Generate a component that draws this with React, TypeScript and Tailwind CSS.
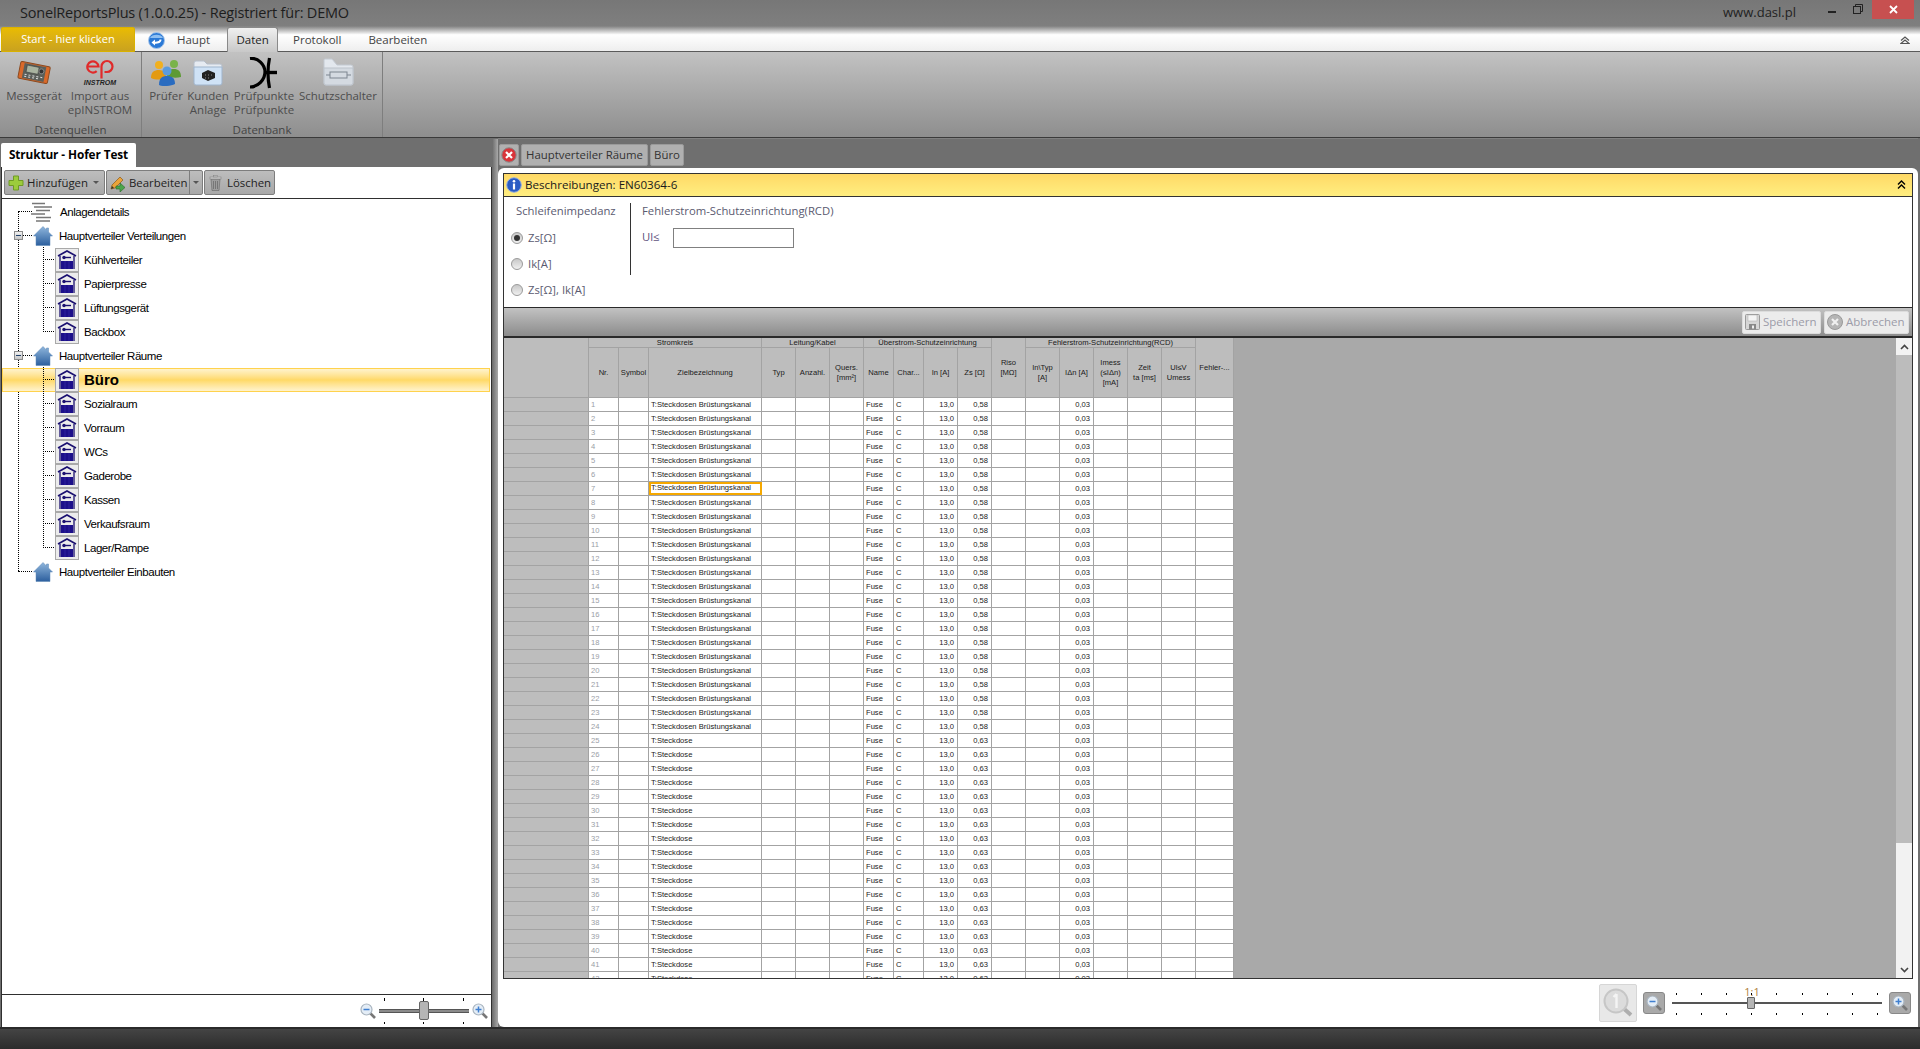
import React from "react";

function Meter() {
  return (
    <svg width="34" height="26" viewBox="0 0 34 26" className="block">
      <g transform="rotate(11 17 13)">
        <rect x="2" y="4" width="30" height="17" rx="1.5" fill="#d9692a" stroke="#8a4a20" />
        <rect x="6" y="5" width="22" height="15" fill="#5b5f5a" />
        <rect x="9" y="6.5" width="12" height="7" fill="#a9b3a0" stroke="#333" strokeWidth=".5" />
        <circle cx="24" cy="10" r="2.5" fill="#333" stroke="#aaa" strokeWidth=".6" />
        <path d="M8 16h2M12 16h2M16 16h2M20 16h2M24 16h2M8 18h2M12 18h2M16 18h2M20 18h2" stroke="#ddd" strokeWidth="1" />
      </g>
    </svg>
  );
}

function EpLogo() {
  return (
    <div className="flex flex-col items-center">
      <svg width="28" height="20" viewBox="0 0 28 20" className="block">
        <path d="M1.5 7.5h11a5.6 5.6 0 1 0-1.8 4.6" fill="none" stroke="#e02a2a" strokeWidth="2.2" />
        <path d="M15.5 19.5V7.5a5.5 5.5 0 1 1 5.5 5.5h-2.5" fill="none" stroke="#e02a2a" strokeWidth="2.2" />
      </svg>
      <span className="font-['Liberation_Sans',sans-serif] text-[7px] leading-[8px] font-bold italic text-[#222]">INSTROM</span>
    </div>
  );
}

function People() {
  return (
    <svg width="32" height="27" viewBox="0 0 32 27" className="block">
      <circle cx="9" cy="6" r="4" fill="#f2b01e" />
      <path d="M1 19c0-6 3-8 8-8s7 3 7 8c-4 2-11 2-15 0z" fill="#e39a12" />
      <circle cx="24" cy="5" r="4" fill="#79b34a" />
      <path d="M17 17c0-6 3-7 7-7s7 2 7 8c-4 1-10 1-14-1z" fill="#5e9a35" />
      <circle cx="17" cy="12" r="4.5" fill="#5a9bde" />
      <path d="M9 26c0-7 3-9 8-9s8 2 8 8c-4 2-12 3-16 1z" fill="#2a6cc0" />
    </svg>
  );
}

function FolderChip() {
  return (
    <svg width="30" height="26" viewBox="0 0 30 26" className="block">
      <path d="M1 3q0-2 2-2h8l3 3h13q2 0 2 2v4H1z" fill="#e6ebf2" stroke="#b6bfcb" />
      <path d="M1 7h28v16q0 2-2 2H3q-2 0-2-2z" fill="#cfe2f6" stroke="#9fb4cc" />
      <path d="M9 13l6-3 7 3v5l-7 3-6-3z" fill="#222" />
      <path d="M12 15h1M15 15h1M18 15h1M12 18h1M15 18h1" stroke="#888" />
    </svg>
  );
}

function FolderFuse() {
  return (
    <svg width="31" height="28" viewBox="0 0 31 28" className="block">
      <path d="M1 2q0-1 1-1h7l5 6h14q2 0 2 2v16q0 2-2 2H3q-2 0-2-2z" fill="#e3e8ee" stroke="#c4cad2" />
      <path d="M1 10h29v15q0 2-2 2H3q-2 0-2-2z" fill="#d4dae1" stroke="#bcc3cb" />
      <path d="M3 17h4M24 17h4" stroke="#7c8590" />
      <rect x="7" y="14" width="17" height="6" fill="none" stroke="#7c8590" />
    </svg>
  );
}

function BreakerSymbol() {
  return (
    <svg width="30" height="32" viewBox="0 0 30 32" className="block">
      <path d="M1 1.5c8-1 15 6 15 13.5S9 30 1 30" fill="none" stroke="#000" strokeWidth="3.2" />
      <path d="M20.5 1c-2 10-2 20 0 30" fill="none" stroke="#000" strokeWidth="3.2" />
      <path d="M15 15.5h13" fill="none" stroke="#000" strokeWidth="3.4" />
    </svg>
  );
}

function BackIcon() {
  return (
    <svg width="17" height="17" viewBox="0 0 17 17" className="block">
      <circle cx="8.5" cy="8.5" r="8" fill="#2a79d6" stroke="#a7c6ea" />
      <path d="M2 6a7 5 0 0 1 13 0z" fill="#8fc0f2" />
      <path d="M12.5 7.5c0 3-4 3.5-6.5 3" fill="none" stroke="#fff" strokeWidth="2" />
      <path d="M7 7.5l-3.5 3 3.5 3z" fill="#fff" />
    </svg>
  );
}

function ChevronsUp() {
  return (
    <svg width="9" height="10" viewBox="0 0 9 10" className="block">
      <path d="M1 4.5l3.5-3.5 3.5 3.5" fill="none" stroke="#000" strokeWidth="1.4" />
      <path d="M1 8.5l3.5-3.5 3.5 3.5" fill="none" stroke="#000" strokeWidth="1.4" />
    </svg>
  );
}

function PlusIcon() {
  return (
    <svg width="16" height="16" viewBox="0 0 16 16" className="block">
      <path d="M5.5 1h5v4.5H15v5h-4.5V15h-5v-4.5H1v-5h4.5z" fill="#9ccc3c" stroke="#6f9a25" />
    </svg>
  );
}

function EditIcon() {
  return (
    <svg width="17" height="18" viewBox="0 0 17 18" className="block">
      <path d="M2 15l1-4 8-8 3 3-8 8z" fill="#eaa33a" stroke="#8a5a1a" strokeWidth=".7" />
      <path d="M2 15l1-3 2 2z" fill="#333" />
      <path d="M7 12h4V9l5 4.5-5 4.5v-3H7z" fill="#4aa54a" stroke="#2a6a2a" strokeWidth=".6" />
    </svg>
  );
}

function TrashIcon() {
  return (
    <svg width="13" height="16" viewBox="0 0 13 16" className="block">
      <path d="M2 4h9l-1 11.5H3z" fill="#9d9d9d" stroke="#666" strokeWidth=".6" />
      <rect x="1" y="2" width="11" height="2" fill="#ccc" stroke="#777" strokeWidth=".5" />
      <rect x="4.5" y="0.5" width="4" height="1.5" fill="#bbb" stroke="#777" strokeWidth=".4" />
      <path d="M4.5 6v8M6.5 6v8M8.5 6v8" stroke="#666" strokeWidth=".7" />
    </svg>
  );
}

function LinesIcon() {
  return (
    <svg width="21" height="20" viewBox="0 0 21 20" className="block -ml-[2px] mr-[2px]">
      <path d="M1 1.5h13M3 5h18M5 8.5h14M0 12h14M5 15.5h15M5 19h14" stroke="#777" strokeWidth="1.7" />
    </svg>
  );
}

function HouseIcon() {
  return (
    <svg width="20" height="20" viewBox="0 0 20 20" className="block">
      <defs>
        <linearGradient id="hg" x1="0" y1="0" x2="0" y2="1">
          <stop offset="0" stopColor="#8fb6dc" />
          <stop offset="1" stopColor="#2c5f9e" />
        </linearGradient>
      </defs>
      <path d="M10 .5l3.5 3.5V2h2v4l4 4h-2.5v9.5h-14V10H.5z" fill="url(#hg)" stroke="#5a86b5" strokeWidth=".5" />
    </svg>
  );
}

function BoxIcon() {
  return (
    <div className="w-6 h-6 shrink-0 bg-[#ececec] border border-[#a9a9a9] flex items-center justify-center">
      <svg width="20" height="20" viewBox="0 0 20 20" className="block">
        <path d="M1 6L10 1l9 5" fill="none" stroke="#1a1070" strokeWidth="1.6" />
        <path d="M3 6v13M17 6v13" stroke="#1a1070" strokeWidth="1.3" />
        <circle cx="7" cy="7.5" r="1.7" fill="#1a1070" />
        <path d="M8 7.5h6" stroke="#1a1070" strokeWidth="1.4" />
        <rect x="4" y="11" width="12" height="8" fill="#1c0f8a" />
        <path d="M8 11v8M12 11v8" stroke="#3b30a8" strokeWidth=".6" />
      </svg>
    </div>
  );
}

function Expander() {
  return (
    <span className="absolute left-[13px] top-[7px] w-[9px] h-[9px] bg-gradient-to-b from-[#f2f2f2] to-[#c8c8c8] border border-[#8c8c8c] flex items-center justify-center">
      <span className="block w-[5px] h-px bg-[#20406a]" />
    </span>
  );
}

type TreeItem = { label: string; depth: 0 | 1; kind: "lines" | "house" | "box"; expand?: boolean; selected?: boolean };

const tree: TreeItem[] = [
  { label: "Anlagendetails", depth: 0, kind: "lines" },
  { label: "Hauptverteiler Verteilungen", depth: 0, kind: "house", expand: true },
  { label: "Kühlverteiler", depth: 1, kind: "box" },
  { label: "Papierpresse", depth: 1, kind: "box" },
  { label: "Lüftungsgerät", depth: 1, kind: "box" },
  { label: "Backbox", depth: 1, kind: "box" },
  { label: "Hauptverteiler Räume", depth: 0, kind: "house", expand: true },
  { label: "Büro", depth: 1, kind: "box", selected: true },
  { label: "Sozialraum", depth: 1, kind: "box" },
  { label: "Vorraum", depth: 1, kind: "box" },
  { label: "WCs", depth: 1, kind: "box" },
  { label: "Gaderobe", depth: 1, kind: "box" },
  { label: "Kassen", depth: 1, kind: "box" },
  { label: "Verkaufsraum", depth: 1, kind: "box" },
  { label: "Lager/Rampe", depth: 1, kind: "box" },
  { label: "Hauptverteiler Einbauten", depth: 0, kind: "house" },
];

function TreeRow({ item }: { item: TreeItem }) {
  return (
    <div className={"relative h-6 flex items-center " + (item.depth === 0 ? "pl-[32px]" : "pl-[54px]")}>
      {item.selected && (
        <span className="absolute inset-x-[1px] inset-y-0 bg-gradient-to-b from-[#fff3cc] via-[#ffd966] to-[#fff3cc] border border-[#ffd24d]" />
      )}
      {item.depth === 0 ? (
        <span className="absolute left-[17px] w-[14px] top-[11px] border-t border-dotted border-black" />
      ) : (
        <span className="absolute left-[42px] w-[13px] top-[11px] border-t border-dotted border-black" />
      )}
      {item.expand && <Expander />}
      <div className="relative flex items-center">
        {item.kind === "lines" && <LinesIcon />}
        {item.kind === "house" && <HouseIcon />}
        {item.kind === "box" && <BoxIcon />}
        <span
          className={
            "font-['Liberation_Sans',sans-serif] whitespace-nowrap text-black " +
            (item.selected
              ? "ml-[5px] text-[15px] font-bold"
              : item.depth === 0
                ? "ml-[6px] mt-px text-[11.5px] tracking-[-0.45px]"
                : "ml-[5px] mt-px text-[11.5px] tracking-[-0.45px]")
          }
        >
          {item.label}
        </span>
      </div>
    </div>
  );
}

function RibbonBtn({ w, icon, lines, h = "h-[33px]" }: { w: string; icon: React.ReactNode; lines: string[]; h?: string }) {
  return (
    <div className={"flex flex-col items-center shrink-0 " + w}>
      <div className={"flex items-end justify-center " + h}>{icon}</div>
      <div className="text-[11.5px] leading-[14px] text-[#4d4d4d] text-center whitespace-nowrap">
        {lines.map((l, i) => (
          <div key={i}>{l}</div>
        ))}
      </div>
    </div>
  );
}

function ToolBtn({ icon, label, w, caret }: { icon: React.ReactNode; label: string; w: string; caret?: "in" | "split" }) {
  return (
    <div className={"h-[25px] flex items-center rounded-[2px] border border-[#7d7d7d] bg-gradient-to-b from-[#bdbdbd] to-[#a8a8a8] text-[11.4px] text-[#222] " + w}>
      <span className="ml-[2px] w-[17px] flex justify-center shrink-0">{icon}</span>
      <span className="ml-[3px] whitespace-nowrap">{label}</span>
      {caret === "in" && <span className="ml-auto mr-[5px] w-0 h-0 border-x-[3px] border-x-transparent border-t-[3px] border-t-[#555]" />}
      {caret === "split" && (
        <span className="ml-auto h-full w-[13px] border-l border-[#7d7d7d] flex items-center justify-center">
          <span className="w-0 h-0 border-x-[3px] border-x-transparent border-t-[3px] border-t-[#555]" />
        </span>
      )}
    </div>
  );
}

function Radio({ on, label }: { on?: boolean; label: string }) {
  return (
    <div className="h-[26px] flex items-center">
      <span className="w-[12px] h-[12px] rounded-full border border-[#9a9a9a] bg-gradient-to-b from-[#c8c8c8] to-[#f0f0f0] flex items-center justify-center shrink-0">
        {on && <span className="w-[6px] h-[6px] rounded-full bg-[#333]" />}
      </span>
      <span className="ml-[5px] text-[11.3px] text-[#5a5a70] whitespace-nowrap">{label}</span>
    </div>
  );
}

type Col = { key: string; w: string; head: React.ReactNode };

const groups: { title?: string; w?: string; cols: Col[] }[] = [
  {
    title: "Stromkreis",
    w: "w-[173px]",
    cols: [
      { key: "nr", w: "w-[30px]", head: "Nr." },
      { key: "sym", w: "w-[30px]", head: "Symbol" },
      { key: "ziel", w: "w-[113px]", head: "Zielbezeichnung" },
    ],
  },
  {
    title: "Leitung/Kabel",
    w: "w-[102px]",
    cols: [
      { key: "typ", w: "w-[34px]", head: "Typ" },
      { key: "anz", w: "w-[34px]", head: "Anzahl." },
      { key: "qu", w: "w-[34px]", head: <>Quers.<br />[mm²]</> },
    ],
  },
  {
    title: "Überstrom-Schutzeinrichtung",
    w: "w-[128px]",
    cols: [
      { key: "name", w: "w-[30px]", head: "Name" },
      { key: "char", w: "w-[30px]", head: "Char..." },
      { key: "in", w: "w-[34px]", head: "In [A]" },
      { key: "zs", w: "w-[34px]", head: "Zs [Ω]" },
    ],
  },
  { cols: [{ key: "riso", w: "w-[34px]", head: <>Riso<br />[MΩ]</> }] },
  {
    title: "Fehlerstrom-Schutzeinrichtung(RCD)",
    w: "w-[170px]",
    cols: [
      { key: "intyp", w: "w-[34px]", head: <>In\Typ<br />[A]</> },
      { key: "idn", w: "w-[34px]", head: "IΔn [A]" },
      { key: "imess", w: "w-[34px]", head: <>Imess<br />(≤IΔn)<br />[mA]</> },
      { key: "zeit", w: "w-[34px]", head: <>Zeit<br />ta [ms]</> },
      { key: "ul", w: "w-[34px]", head: <>Ul≤V<br />Umess</> },
    ],
  },
  { cols: [{ key: "feh", w: "w-[38px]", head: "Fehler-..." }] },
];

const allCols = groups.flatMap((g) => g.cols);

const rows = Array.from({ length: 42 }, (_, i) => ({
  nr: String(i + 1),
  ziel: i < 24 ? "T:Steckdosen Brüstungskanal" : "T:Steckdose",
  name: "Fuse",
  char: "C",
  in: "13,0",
  zs: i < 24 ? "0,58" : "0,63",
  idn: "0,03",
})) as Record<string, string>[];

function HeadCell({ w, children }: { w: string; children: React.ReactNode }) {
  return (
    <div className={"shrink-0 h-full border-r border-[#a3a3a3] flex items-center justify-center text-center leading-[10px] " + w}>
      <span>{children}</span>
    </div>
  );
}

function Grid() {
  return (
    <div className="flex-1 min-w-0 overflow-hidden bg-[#a9a9a9] font-['Liberation_Sans',sans-serif] text-[7.6px] text-[#1a1a1a]">
      <div className="flex h-[60px] w-max bg-[#bdbdbd] border-b border-[#a3a3a3]">
        <div className="w-[85px] shrink-0 border-r border-[#a3a3a3]" />
        {groups.map((g, i) =>
          g.title ? (
            <div key={i} className={"shrink-0 flex flex-col " + g.w}>
              <div className="h-[10px] leading-[10px] border-b border-[#a3a3a3] border-r text-center">{g.title}</div>
              <div className="flex flex-1">
                {g.cols.map((c) => (
                  <HeadCell key={c.key} w={c.w}>{c.head}</HeadCell>
                ))}
              </div>
            </div>
          ) : (
            <HeadCell key={i} w={g.cols[0].w}>{g.cols[0].head}</HeadCell>
          )
        )}
      </div>
      {rows.map((r, ri) => (
        <div key={ri} className="flex h-[14px] w-max border-b border-[#a3a3a3]">
          <div className="w-[85px] shrink-0 bg-[#bdbdbd] border-r border-[#a3a3a3]" />
          {allCols.map((c) => {
            const val = r[c.key] ?? "";
            const selected = ri === 6 && c.key === "ziel";
            const right = c.key === "in" || c.key === "zs" || c.key === "idn";
            return (
              <div
                key={c.key}
                className={
                  "shrink-0 bg-white whitespace-nowrap overflow-hidden " +
                  c.w +
                  (right ? " text-right pr-[3px]" : selected ? "" : " pl-[2px]") +
                  (c.key === "nr" ? " text-[#9a9ea6]" : "") +
                  (selected ? " border-2 border-[#f5a800] leading-[8px]" : " leading-[13px] border-r border-[#a3a3a3]")
                }
              >
                {val}
              </div>
            );
          })}
        </div>
      ))}
    </div>
  );
}

function Magnifier({ sign }: { sign: "+" | "-" }) {
  return (
    <svg width="16" height="16" viewBox="0 0 16 16" className="block">
      <path d="M10 10l5 5" stroke="#777" strokeWidth="2.6" />
      <circle cx="6.5" cy="6.5" r="5.5" fill="#e4edf6" stroke="#a9b4bf" strokeWidth="1.2" />
      <path d={sign === "+" ? "M3.5 6.5h6M6.5 3.5v6" : "M3.5 6.5h6"} stroke="#3f7fd0" strokeWidth="1.5" />
    </svg>
  );
}

const leftTicks = [5, 44, 84];
const rightTicks = [0, 25, 50, 75, 100, 126, 151, 176, 201];

export default function App() {
  return (
    <div className="w-full h-[1049px] flex flex-col overflow-hidden bg-[#6f6f6f] font-['Open_Sans','Noto_Sans',sans-serif]">
      {/* title */}
      <div className="h-[26px] shrink-0 flex items-center bg-gradient-to-b from-[#777777] to-[#7f7f7f]">
        <span className="ml-[20px] text-[14.5px] tracking-[-0.2px] text-[#1d1d1d] whitespace-nowrap">SonelReportsPlus (1.0.0.25) - Registriert für: DEMO</span>
        <span className="ml-auto text-[13px] text-[#222] whitespace-nowrap">www.dasl.pl</span>
        <div className="ml-[32px] w-[8px] h-[2px] bg-[#222] mt-[-2px]" />
        <svg width="10" height="10" viewBox="0 0 10 10" className="block ml-[17px] mt-[-8px]">
          <path d="M2.5 2.5V.5h7v7h-2" fill="none" stroke="#222" />
          <rect x=".5" y="2.5" width="7" height="7" fill="none" stroke="#222" />
        </svg>
        <div className="ml-[9px] mr-[6px] w-[42px] h-[19px] self-start bg-[#c75050] flex items-center justify-center">
          <svg width="9" height="9" viewBox="0 0 9 9" className="block">
            <path d="M1 1l7 7M8 1l-7 7" stroke="#fff" strokeWidth="1.8" />
          </svg>
        </div>
      </div>
      {/* tabs */}
      <div className="h-[26px] shrink-0 flex items-end bg-gradient-to-b from-[#808080] via-[#ffffff] via-35% to-[#eeeeee] border-b border-[#5a5a5a] text-[11.5px] text-[#444] relative">
        <div className="ml-[1px] w-[134px] h-[25px] mb-[-1px] flex items-center justify-center rounded-t-[2px] border border-[#d9b100] bg-gradient-to-b from-[#e9bb00] to-[#c9a21e] text-white text-[11.2px]">
          Start - hier klicken
        </div>
        <div className="ml-[13px] self-center mt-[3px]"><BackIcon /></div>
        <span className="ml-[12px] mb-[2px] leading-[18px]">Haupt</span>
        <div className="ml-[17px] w-[51px] h-[25px] mb-[-1px] flex items-center justify-center rounded-t-[3px] border border-b-0 border-[#8a8a8a] bg-gradient-to-b from-[#f0f0f0] to-[#c8c8c8] text-[#222] z-10">Daten</div>
        <span className="ml-[15px] mb-[2px] leading-[18px]">Protokoll</span>
        <span className="ml-[27px] mb-[2px] leading-[18px]">Bearbeiten</span>
        <span className="ml-auto mr-[10px] mb-[7px]">
          <svg width="10" height="8" viewBox="0 0 10 8" className="block">
            <path d="M1 4.5L5 1l4 3.5M1 7.5h8L5 4z" fill="none" stroke="#555" strokeWidth="1.2" />
          </svg>
        </span>
      </div>
      {/* ribbon */}
      <div className="h-[86px] shrink-0 flex bg-gradient-to-b from-[#c2c2c2] to-[#8e8e8e] border-b border-[#3a3a3a]">
        <div className="w-[142px] shrink-0 flex flex-col border-r border-[#7e7e7e]">
          <div className="flex flex-1 pt-[4px]">
            <RibbonBtn w="w-[68px]" h="h-[33px] pb-[3px]" icon={<Meter />} lines={["Messgerät"]} />
            <RibbonBtn w="w-[64px]" h="h-[33px] pb-[2px]" icon={<EpLogo />} lines={["Import aus", "epINSTROM"]} />
          </div>
          <div className="h-[15px] text-center text-[11.5px] text-[#444] leading-[15px]">Datenquellen</div>
        </div>
        <div className="w-[241px] shrink-0 flex flex-col border-r border-[#7e7e7e]">
          <div className="flex flex-1 pt-[4px]">
            <RibbonBtn w="w-[48px]" h="h-[33px] pb-[3px]" icon={<People />} lines={["Prüfer"]} />
            <RibbonBtn w="w-[36px]" h="h-[33px] pb-[3px]" icon={<FolderChip />} lines={["Kunden", "Anlage"]} />
            <RibbonBtn w="w-[76px]" icon={<BreakerSymbol />} lines={["Prüfpunkte", "Prüfpunkte"]} />
            <RibbonBtn w="w-[72px]" h="h-[33px] pb-[3px]" icon={<FolderFuse />} lines={["Schutzschalter"]} />
          </div>
          <div className="h-[15px] text-center text-[11.5px] text-[#444] leading-[15px]">Datenbank</div>
        </div>
      </div>
      {/* main */}
      <div className="flex-1 min-h-0 flex">
        {/* left */}
        <div className="w-[492px] shrink-0 flex flex-col pt-[5px] pl-[1px]">
          <div className="h-[24px] w-[135px] bg-white rounded-t-[2px] flex items-center justify-center text-[11.8px] font-bold text-black tracking-[-0.1px]">Struktur - Hofer Test</div>
          <div className="flex-1 min-h-0 flex flex-col bg-white border-x border-[#2f2f2f]">
            <div className="h-[32px] shrink-0 pt-[3px] pl-[2px] flex gap-[1px] border-b border-[#2f2f2f]">
              <ToolBtn w="w-[101px]" icon={<PlusIcon />} label="Hinzufügen" caret="in" />
              <ToolBtn w="w-[97px]" icon={<EditIcon />} label="Bearbeiten" caret="split" />
              <ToolBtn w="w-[71px]" icon={<TrashIcon />} label="Löschen" />
            </div>
            <div className="relative flex-1 min-h-0 pt-[1px]">
              <span className="absolute left-[16px] top-[12px] h-[360px] border-l border-dotted border-black" />
              <span className="absolute left-[41px] top-[48px] h-[85px] border-l border-dotted border-black" />
              <span className="absolute left-[41px] top-[168px] z-10 h-[181px] border-l border-dotted border-black" />
              <div className="-ml-[1px]">
                {tree.map((t) => (
                  <TreeRow key={t.label} item={t} />
                ))}
              </div>
            </div>
            <div className="h-[33px] shrink-0 border-t border-[#2f2f2f] flex items-center justify-end pr-[3px]">
              <Magnifier sign="-" />
              <div className="relative w-[90px] h-[26px] mx-[3px]">
                <div className="absolute inset-x-0 top-[11px] h-[4px] bg-[#8a8a8a] border-y border-[#555]" />
                <div className="absolute left-[40px] top-[3px] w-[10px] h-[19px] rounded-[2px] bg-[#b5b5b5] border border-[#666]" />
                {leftTicks.map((x) => (
                  <React.Fragment key={x}>
                    <span className="absolute top-0 w-px h-[3px] bg-black" style={{ left: x }} />
                    <span className="absolute bottom-0 w-px h-[2px] bg-black" style={{ left: x }} />
                  </React.Fragment>
                ))}
              </div>
              <Magnifier sign="+" />
            </div>
          </div>
        </div>
        {/* splitter */}
        <div className="w-[6px] shrink-0 mt-[1px] bg-gradient-to-r from-[#6a6a6a] to-[#a9a9a9]" />
        {/* right */}
        <div className="flex-1 min-w-0 flex flex-col pr-[2px]">
          <div className="h-[30px] shrink-0 pt-[5px] pl-[1px] flex gap-[2px] border-t-[1px] border-[#808080]">
            <div className="w-[20px] h-[22px] rounded-[2px] bg-[#b0b0b0] border border-[#9a9a9a] flex items-center justify-center">
              <svg width="16" height="16" viewBox="0 0 16 16" className="block">
                <circle cx="8" cy="8" r="7.2" fill="#d8343a" stroke="#888" />
                <path d="M5 5l6 6M11 5l-6 6" stroke="#fff" strokeWidth="2.2" />
              </svg>
            </div>
            <div className="w-[127px] h-[22px] rounded-[2px] bg-[#b0b0b0] border border-[#9a9a9a] flex items-center justify-center text-[11.4px] text-[#333] whitespace-nowrap">Hauptverteiler Räume</div>
            <div className="w-[34px] h-[22px] rounded-[2px] bg-[#b0b0b0] border border-[#9a9a9a] flex items-center justify-center text-[11.4px] text-[#333]">Büro</div>
          </div>
          <div className="flex-1 min-h-0 bg-white rounded-t-[6px] rounded-bl-[6px] px-[5px] pt-[5px] flex flex-col">
            {/* yellow */}
            <div className="h-[24px] shrink-0 flex items-center border border-[#333] bg-gradient-to-b from-[#ffd966] to-[#ffee80] pl-[2px] pr-[6px]">
              <svg width="16" height="16" viewBox="0 0 16 16" className="block">
                <circle cx="8" cy="8" r="7.3" fill="#2a5cc4" stroke="#9ab0dc" />
                <circle cx="8" cy="4.2" r="1.3" fill="#fff" />
                <path d="M8 6.5v6" stroke="#fff" strokeWidth="2.2" />
              </svg>
              <span className="ml-[3px] text-[11.6px] text-[#1a1a1a]">Beschreibungen: EN60364-6</span>
              <span className="ml-auto"><ChevronsUp /></span>
            </div>
            {/* form + grid frame */}
            <div className="flex-1 min-h-0 flex flex-col border-x border-[#333]">
              <div className="h-[110px] shrink-0 flex pl-[11px] pt-[4px]">
                <div className="w-[115px] shrink-0 flex flex-col">
                  <div className="h-[21px] pl-[1px] flex items-center text-[11.3px] text-[#5a5a70] whitespace-nowrap">Schleifenimpedanz</div>
                  <div className="mt-[3px] -ml-[4px]">
                    <Radio on label="Zs[Ω]" />
                    <Radio label="Ik[A]" />
                    <Radio label="Zs[Ω], Ik[A]" />
                  </div>
                </div>
                <div className="w-px h-[72px] mt-[2px] bg-[#333] shrink-0" />
                <div className="pl-[11px] flex flex-col">
                  <div className="h-[21px] flex items-center text-[11.3px] text-[#5a5a70] whitespace-nowrap">Fehlerstrom-Schutzeinrichtung(RCD)</div>
                  <div className="flex items-center mt-[5px] h-[21px]">
                    <span className="w-[31px] text-[11.3px] text-[#5f5580]">Ul≤</span>
                    <div className="w-[121px] h-[20px] border border-[#808080] bg-white" />
                  </div>
                </div>
              </div>
              <div className="h-[31px] shrink-0 border-t border-b-2 border-[#2a2a2a] bg-gradient-to-b from-[#c2c2c2] to-[#8c8c8c] flex items-center justify-end gap-[3px] pr-[3px]">
                <div className="w-[79px] h-[23px] rounded-[2px] bg-[#ececec] border border-[#dcdcdc] flex items-center pl-[2px] text-[11.5px] text-[#9b9ba8]">
                  <svg width="15" height="16" viewBox="0 0 15 16" className="block">
                    <rect x=".5" y=".5" width="14" height="15" rx="1" fill="#d6d6d6" stroke="#9a9a9a" />
                    <rect x="3" y="1" width="9" height="6" fill="#f4f4f4" stroke="#aaa" strokeWidth=".5" />
                    <rect x="4" y="10" width="7" height="5.5" fill="#888" />
                    <rect x="7" y="11.5" width="2" height="3" fill="#eee" />
                  </svg>
                  <span className="ml-[3px]">Speichern</span>
                </div>
                <div className="w-[85px] h-[23px] rounded-[2px] bg-[#ececec] border border-[#dcdcdc] flex items-center pl-[2px] text-[11.5px] text-[#9b9ba8]">
                  <svg width="16" height="16" viewBox="0 0 16 16" className="block">
                    <circle cx="8" cy="8" r="7.5" fill="#b5b5b5" stroke="#9a9a9a" />
                    <path d="M5 5l6 6M11 5l-6 6" stroke="#f0f0f0" strokeWidth="2.2" />
                  </svg>
                  <span className="ml-[3px]">Abbrechen</span>
                </div>
              </div>
              {/* grid with scrollbar */}
              <div className="flex-1 min-h-0 flex">
                <Grid />
                <div className="w-[16px] shrink-0 bg-[#f2f2f2] flex flex-col items-center">
                  <div className="h-[17px] flex items-center justify-center">
                    <svg width="9" height="6" viewBox="0 0 9 6" className="block"><path d="M1 5l3.5-3.5L8 5" fill="none" stroke="#444" strokeWidth="1.6" /></svg>
                  </div>
                  <div className="w-full h-[488px] bg-[#bcbcbc]" />
                  <div className="mt-auto h-[17px] flex items-center justify-center">
                    <svg width="9" height="6" viewBox="0 0 9 6" className="block"><path d="M1 1l3.5 3.5L8 1" fill="none" stroke="#444" strokeWidth="1.6" /></svg>
                  </div>
                </div>
              </div>
            </div>
            {/* footer */}
            <div className="h-[49px] shrink-0 flex items-center justify-end pr-[2px] border-t border-[#333]">
              <div className="w-[38px] h-[38px] rounded-[2px] bg-[#e8e8e8] border border-[#d6d6d6] flex items-center justify-center">
                <svg width="30" height="30" viewBox="0 0 30 30" className="block">
                  <path d="M19 19l9 8" stroke="#aeaeae" strokeWidth="4" />
                  <circle cx="13" cy="13" r="11.5" fill="#dcdcdc" stroke="#c6c6c6" strokeWidth="2" />
                  <path d="M13.5 6v14M10.5 9l3-3" fill="none" stroke="#f4f4f4" strokeWidth="2.4" />
                </svg>
              </div>
              <div className="ml-[6px] w-[22px] h-[22px] rounded-[3px] bg-[#a9a9a9] border border-[#888] flex items-center justify-center"><Magnifier sign="-" /></div>
              <div className="relative w-[210px] h-[36px] mx-[7px]">
                <span className="absolute left-[71px] top-[0px] w-[18px] text-center text-[11px] leading-[14px] text-[#b0803a] whitespace-nowrap">1:1</span>
                <div className="absolute inset-x-0 top-[17px] h-[2px] bg-[#555]" />
                <div className="absolute left-[75px] top-[12px] w-[8px] h-[12px] rounded-[1px] bg-[#b5b5b5] border border-[#666]" />
                {rightTicks.map((x) => (
                  <React.Fragment key={x}>
                    <span className="absolute top-[8px] w-px h-[2px] bg-black" style={{ left: x + 4 }} />
                    <span className="absolute top-[28px] w-px h-[2px] bg-black" style={{ left: x + 4 }} />
                  </React.Fragment>
                ))}
              </div>
              <div className="w-[22px] h-[22px] rounded-[3px] bg-[#a9a9a9] border border-[#888] flex items-center justify-center"><Magnifier sign="+" /></div>
            </div>
          </div>
        </div>
      </div>
      {/* status */}
      <div className="h-[22px] shrink-0 border-t-2 border-[#2a2a2a] bg-gradient-to-b from-[#444444] to-[#2c2c2c]" />
    </div>
  );
}
